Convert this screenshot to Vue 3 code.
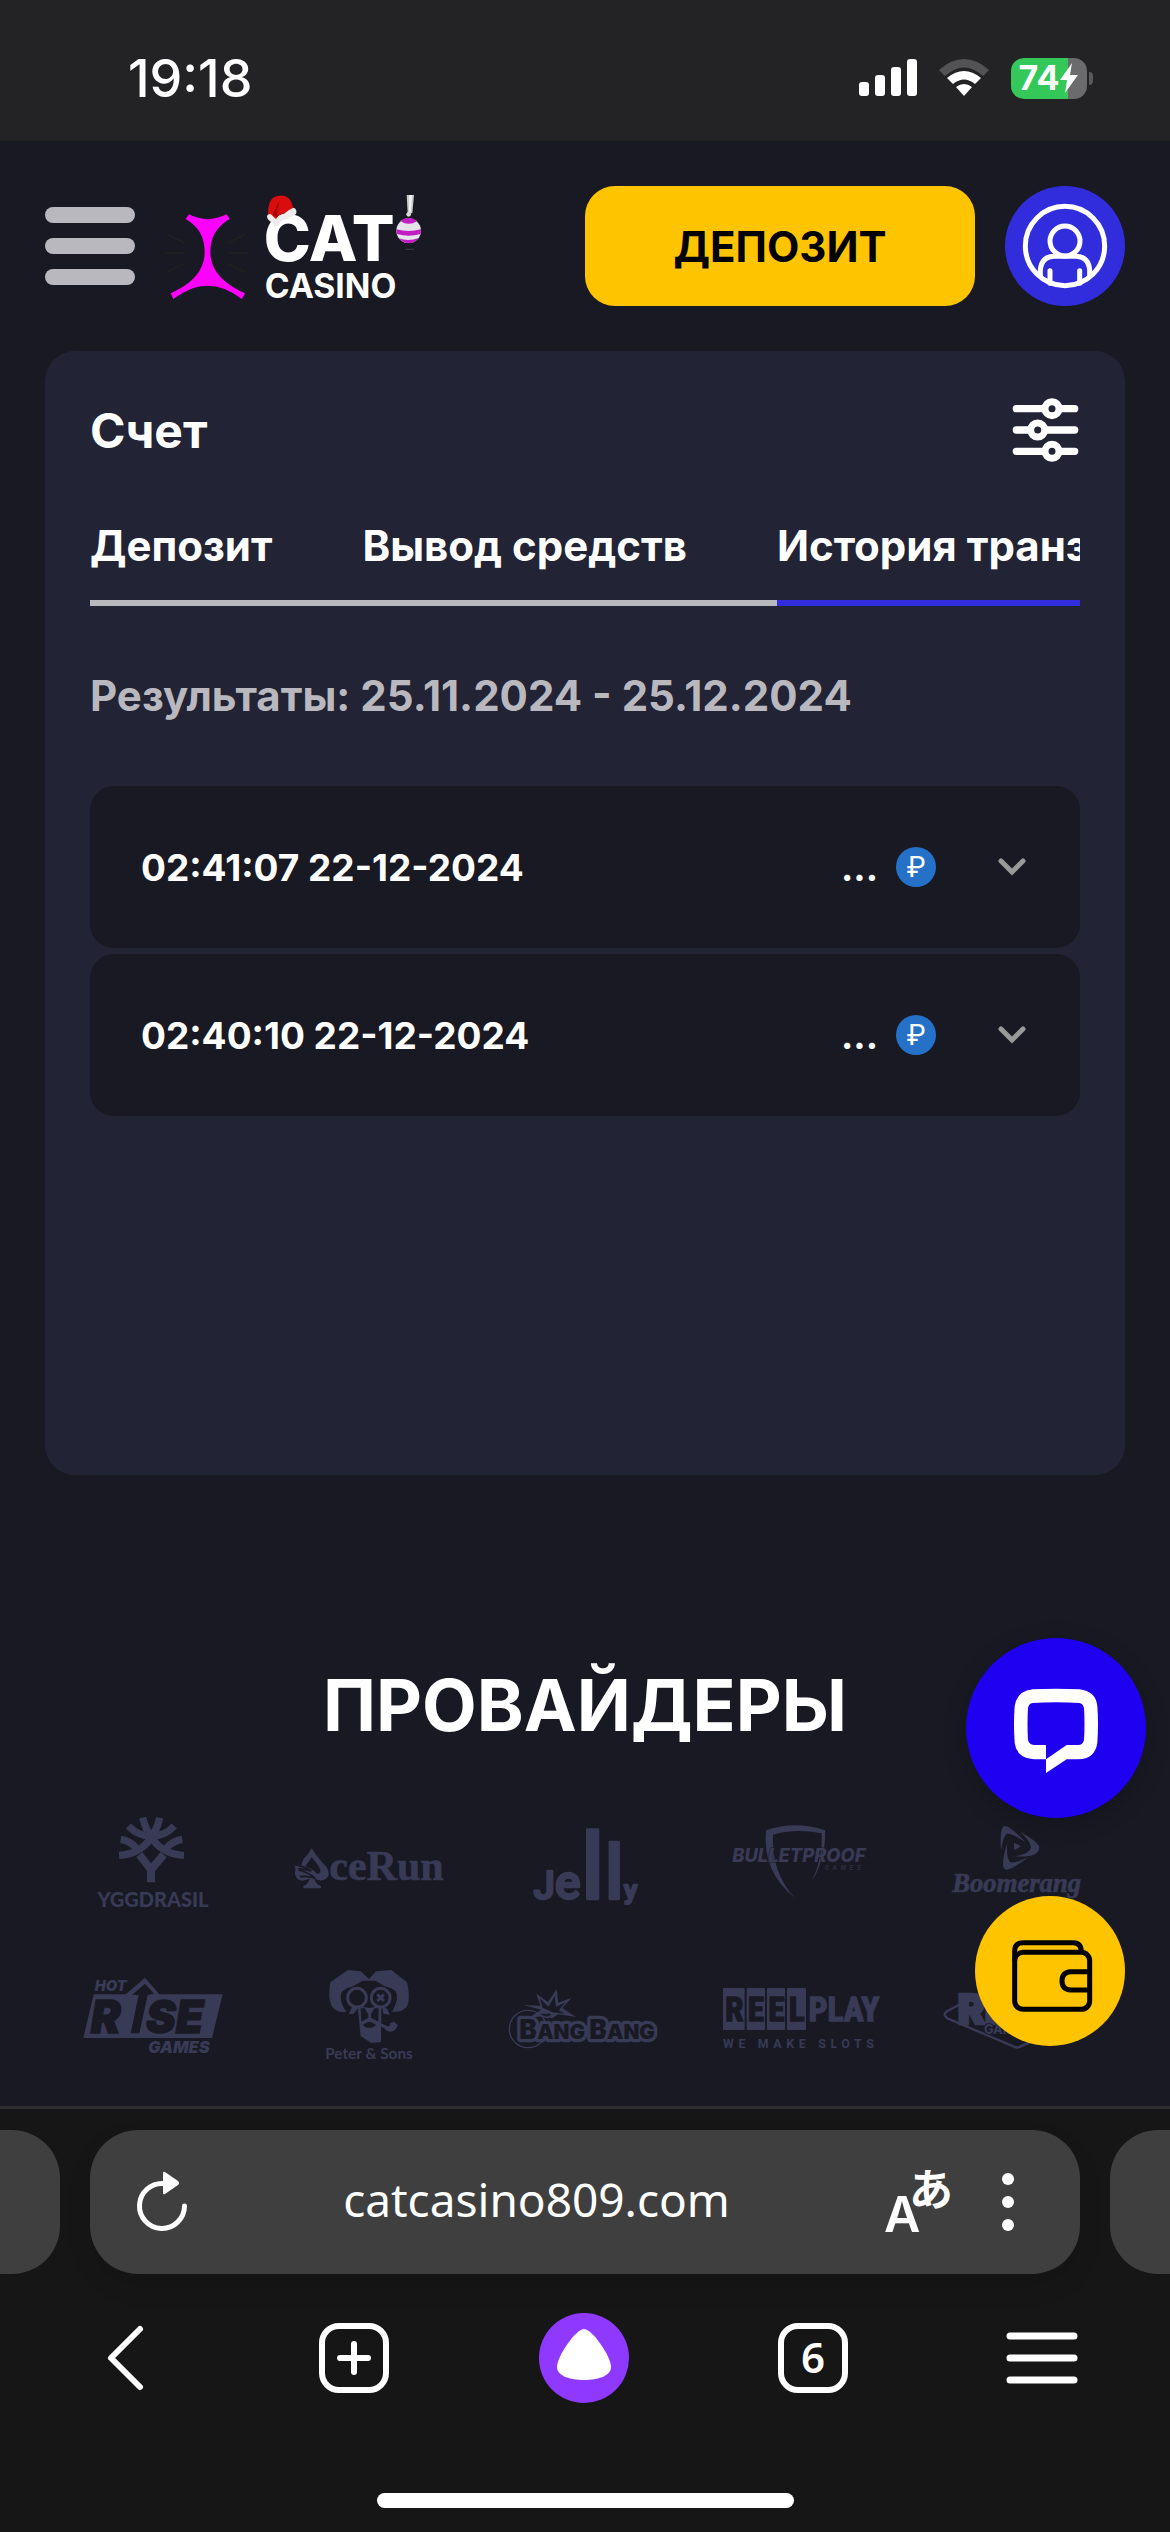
<template>
  <div class="screen">
    <div class="status-bar">
      <span class="clock">19:18</span>
      <div class="status-icons">
        <svg width="58" height="38" viewBox="0 0 58 38" fill="#fff" aria-hidden="true">
          <rect x="0" y="23" width="10" height="14" rx="3" />
          <rect x="16" y="16" width="10" height="21" rx="3" />
          <rect x="32" y="8" width="10" height="29" rx="3" />
          <rect x="48" y="0" width="10" height="37" rx="3" />
        </svg>
        <svg width="50" height="38" viewBox="0 0 50 38" aria-hidden="true">
          <path d="M0 11Q25-11 50 11L44 17Q25 0 6 17Z" fill="#535355" />
          <path d="M8 19Q25 5 42 19L36 25Q25 16 14 25Z" fill="#fff" />
          <path d="M17 28Q25 22 33 28L25 37Z" fill="#fff" />
        </svg>
        <div class="battery">
          <span class="battery-level">74</span>
          <svg width="20" height="30" viewBox="0 0 20 30" fill="#fff" aria-hidden="true">
            <path d="M13 0L1 17H8L6 30L19 12H11Z" />
          </svg>
        </div>
      </div>
    </div>

    <div class="page">
      <header class="site-header">
        <button class="menu-btn" aria-label="Меню">
          <span></span>
          <span></span>
          <span></span>
        </button>
        <a href="#" class="logo" aria-label="Cat Casino">
          <svg width="262" height="116" viewBox="45 24 786 348">
            <g stroke="#20201f" stroke-width="5">
              <path d="M52 163L104 189M47 219H102M50 277L105 250M285 163L233 189M292 219H237M286 277L233 251" />
            </g>
            <path d="M107 117L117 103Q172 132 230 103L239 117C196 141 181 176 181 217C182 264 210 306 285 340L276 357Q172 277 70 357L62 340C137 306 163 264 164 217C164 176 150 141 107 117Z" fill="#ff00ff" />
            <g class="logo-text">
              <text x="341" y="244" font-size="190" font-weight="800">CAT</text>
              <text x="344" y="354" font-size="101" font-weight="700">CASINO</text>
            </g>
            <path d="M354 113C353 70 361 48 390 47C413 45 426 60 430 88L384 107L380 124L356 116Z" fill="#d90d0d" />
            <path d="M368 104Q378 78 388 66Q380 90 382 112Z" fill="#a50505" />
            <path d="M351 107Q360 97 368 108L378 117Q388 103 402 101Q418 87 431 83Q443 88 438 102Q415 118 397 121L383 138Q372 141 369 129Q350 120 351 107Z" fill="#eeecec" />
            <path d="M770 45H792L787 100H773Z" fill="#c9c9cd" />
            <path d="M778 45H786L782 98H777Z" fill="#f5f5f7" />
            <circle cx="776" cy="152" r="37" fill="#e4e4ea" />
            <path d="M752 124Q776 139 801 124Q790 114 776 114Q761 114 752 124ZM739 148Q776 158 813 148L812 162Q776 172 741 162ZM747 175Q776 186 806 174Q794 190 776 190Q758 189 747 175Z" fill="#c41cc4" />
            <circle cx="776" cy="103" r="7" fill="#ddd" />
            <path d="M767 208H792" stroke="#3f3f49" stroke-width="3" />
          </svg>
        </a>
        <button class="deposit-btn">ДЕПОЗИТ</button>
        <button class="profile-btn" aria-label="Профиль">
          <svg width="120" height="120" viewBox="75 48 360 360" fill="none" stroke="#fff" stroke-width="15">
            <circle cx="255" cy="228" r="119" />
            <circle cx="255" cy="213" r="45" />
            <path d="M181 322V302Q183 259 225 259H285Q327 259 329 302V322" />
            <path d="M210 340V302M299 340V302" stroke-linecap="round" />
          </svg>
        </button>
      </header>

      <main class="card">
        <div class="card-head">
          <h1>Счет</h1>
          <button class="filter-btn" aria-label="Фильтр">
            <svg width="68" height="66" viewBox="96 680 204 198">
              <path d="M109 715H284M109 779H284M109 843H284" stroke="#fff" stroke-width="22" stroke-linecap="round" />
              <g fill="#222334" stroke="#fff" stroke-width="21">
                <circle cx="216" cy="715" r="21" />
                <circle cx="173" cy="779" r="21" />
                <circle cx="216" cy="843" r="21" />
              </g>
            </svg>
          </button>
        </div>

        <nav class="tabs">
          <button
            v-for="tab in tabs"
            :key="tab"
            class="tab"
            :class="{ 'tab-active': tab === activeTab }"
            @click="activeTab = tab"
          >{{ tab }}</button>
        </nav>

        <p class="results">Результаты: 25.11.2024 - 25.12.2024</p>

        <div class="history">
          <button v-for="item in transactions" :key="item" class="history-row">
            <span class="history-date">{{ item }}</span>
            <span class="history-amount">...</span>
            <span class="currency">₽</span>
            <svg width="30" height="20" viewBox="0 0 30 20" fill="none" stroke="#999" stroke-width="5" stroke-linecap="round" aria-hidden="true">
              <path d="M4 4L15 15L26 4" />
            </svg>
          </button>
        </div>
      </main>

      <section class="providers">
        <h2>ПРОВАЙДЕРЫ</h2>
        <div class="provider-grid">
          <!-- Yggdrasil -->
          <svg viewBox="-45 -6 648 459">
            <g fill="none" stroke="#383a56" stroke-width="22">
              <path d="M248 86Q258 128 276 142Q242 196 177 199M299 86Q290 128 272 142Q306 196 372 199" />
              <path d="M205 111Q235 142 276 142M343 111Q313 142 272 142M182 151Q212 156 230 178M367 151Q337 156 318 178" />
              <path d="M238 197L273 242L311 197M273 236V280" stroke-width="24" />
            </g>
            <text x="279" y="353" font-family="Lato" font-size="60" font-weight="900" text-anchor="middle">YGGDRASIL</text>
          </svg>
          <!-- AceRun -->
          <svg viewBox="603 -6 648 459">
            <path d="M755 177Q770 204 797 231Q817 259 793 272Q777 278 762 268Q766 285 783 291V298H730V291Q746 285 749 268Q736 278 717 273Q700 262 707 241L702 226L724 228L730 211Q747 194 755 177ZM755 205L736 232Q760 240 770 254Q785 255 780 239Q771 222 755 205Z" fill-rule="evenodd" />
            <path d="M702 226Q734 232 754 246Q735 242 716 239M715 243Q744 249 766 268Q745 260 720 263" stroke="#191923" stroke-width="5" fill="none" />
            <text x="808" y="272" font-family="Liberation Serif" font-size="126" font-weight="700" stroke="#383a56" stroke-width="2">ceRun</text>
          </svg>
          <!-- Jelly -->
          <svg viewBox="-9 -6 648 459">
            <text x="316" y="329" font-family="Roboto" font-weight="500" text-anchor="middle" stroke="#383a56" stroke-width="7" stroke-linejoin="round"><tspan font-size="115">J</tspan><tspan font-size="145">e</tspan><tspan font-size="280">l</tspan><tspan font-size="230">l</tspan><tspan font-size="80">y</tspan></text>
          </svg>
          <!-- Bulletproof -->
          <svg viewBox="639 -6 648 459">
            <path d="M858 124Q948 94 1035 124Q1039 204 996 277Q1029 204 1025 133Q945 117 879 137Q874 252 945 327Q846 249 858 124Z" />
            <text x="757" y="219" font-family="Inter" font-size="55" font-weight="800" font-style="italic" stroke="#191923" stroke-width="3" paint-order="stroke">BULLETPROOF</text>
            <text x="1034" y="242" font-family="Inter" font-size="17" font-style="italic" class="tracked">GAMES</text>
          </svg>
          <!-- Boomerang -->
          <svg viewBox="87 564 648 459">
            <path d="M363 756Q359 690 371 682Q383 673 438 731Q393 700 380 705Q370 710 363 756ZM420 698Q479 731 478 746Q475 777 405 772Q451 763 453 746Q454 730 420 698ZM382 731Q378 782 392 790Q402 794 446 774Q392 815 377 812Q359 805 382 731ZM402 731L423 742L402 754Z" />
            <text x="410" y="880" font-family="Liberation Serif" font-size="80" font-weight="700" font-style="italic" text-anchor="middle" stroke="#383a56" stroke-width="2">Boomerang</text>
          </svg>
          <!-- Hot Rise Games -->
          <svg viewBox="-45 453 648 459">
            <path d="M101 616H197L255 566L298 616H488L456 747H70Z" />
            <path d="M216 618L255 584L282 614L263 618L238 733H212L236 618Z" fill="#191923" />
            <g font-family="Inter" font-style="italic" font-weight="900">
              <text x="104" y="607" font-size="44">HOT</text>
              <g fill="#191923" stroke="#191923" stroke-width="4">
                <text x="92" y="732" font-size="134">R</text>
                <text x="258" y="732" font-size="134">SE</text>
              </g>
              <text x="265" y="791" font-size="49">GAMES</text>
            </g>
          </svg>
          <!-- Peter & Sons -->
          <svg viewBox="603 453 648 459">
            <path d="M859 668Q825 673 814 649Q803 625 811 580L864 543L902 547L927 570L948 547L994 543L1041 580Q1052 622 1042 650Q1030 671 996 668Q1020 628 1006 606Q994 595 977 593L946 575H908L876 593Q853 597 844 611Q836 637 859 668Z" />
            <path d="M893 651L902 742L934 762L963 759L964 650L928 657Z" />
            <g fill="#191923">
              <path d="M900 590Q927 568 953 590L938 602H918Z" />
              <path d="M902 658H914L925 676V686L904 698ZM956 658H944L933 676V686L955 698Z" />
              <path d="M904 708L928 693L953 708L941 716Q928 722 914 716Z" stroke="#383a56" stroke-width="5" />
            </g>
            <g fill="#191923" stroke="#383a56" stroke-width="9">
              <circle cx="891" cy="626" r="28" />
              <circle cx="962" cy="626" r="28" />
              <path d="M952 616L972 636M972 616L952 636M961 707L984 718" />
            </g>
            <path d="M877 652L894 658L881 674L866 676ZM967 654L982 660L990 677L970 674ZM979 714Q993 713 990 703L1002 698L1014 709Q1006 728 991 728Q982 728 974 720Z" />
            <text x="927" y="811" font-family="Lato" font-size="46" font-weight="700" text-anchor="middle">Peter &amp; Sons</text>
          </svg>
          <!-- Bang Bang -->
          <svg viewBox="-9 453 648 459">
            <circle cx="144" cy="720" r="56" fill="none" stroke="#383a56" stroke-width="4" />
            <path d="M183 662L130 648L181 650L169 614L204 639L230 600L235 641L275 626L247 657L288 684L235 676L216 688L196 680L146 687Z" />
            <path d="M188 656L180 629L206 653L224 621L228 654L256 640L236 664L255 674L218 670Z" fill="#191923" />
            <path d="M176 677Q183 670 198 673Q211 668 218 676L203 686Z" fill="#191923" stroke="#383a56" stroke-width="5" />
            <text x="118" y="750" font-family="Inter" font-size="62" font-weight="900" fill="#191923" stroke="#383a56" stroke-width="20" stroke-linejoin="round" paint-order="stroke"><tspan font-size="80">B</tspan>ANG <tspan font-size="80">B</tspan>ANG</text>
          </svg>
          <!-- ReelPlay -->
          <svg viewBox="639 453 648 459">
            <rect x="729" y="597" width="65" height="126" rx="3" />
            <rect x="800" y="597" width="55" height="126" rx="3" />
            <rect x="861" y="597" width="54" height="126" rx="3" />
            <rect x="921" y="597" width="57" height="126" rx="3" />
            <g class="reel" font-weight="700" text-anchor="middle" font-size="100" stroke-width="4">
              <g fill="#191923" stroke="#191923">
                <text x="763" y="697">R</text>
                <text x="828" y="697">E</text>
                <text x="889" y="697">E</text>
                <text x="950" y="697">L</text>
              </g>
              <text x="1092" y="697" stroke="#383a56">PLAY</text>
            </g>
            <text x="729" y="778" font-family="Roboto" font-size="37" font-weight="700" class="tracked-wide">WE MAKE SLOTS</text>
          </svg>
          <!-- Red Rake -->
          <svg viewBox="87 1023 648 459">
            <path d="M240 1216L204 1235Q184 1246 204 1259L403 1343Q411 1348 420 1343L610 1259Q630 1246 610 1235L560 1212" fill="none" stroke="#383a56" stroke-width="7" />
            <text x="233" y="1275" font-family="Inter" font-size="122" font-weight="900" stroke="#383a56" stroke-width="8">RED</text>
            <text x="312" y="1305" font-family="Inter" font-size="38" font-weight="800" stroke="#191923" stroke-width="4" paint-order="stroke">GAMES</text>
          </svg>
        </div>
      </section>

      <div class="floating">
        <button class="chat-btn" aria-label="Чат">
          <svg width="180" height="180" viewBox="258 114 540 540">
            <path d="M498 478H462Q411 477 404 428Q400 373 404 318Q411 273 458 268Q528 265 598 268Q647 273 652 318Q656 373 652 428Q645 477 594 478H560L498 519V478L560 435H594Q609 435 612 420Q615 373 612 324Q609 310 598 309Q528 304 458 309Q446 311 444 324Q441 373 444 420Q447 433 462 435H498Z" fill="#fff" fill-rule="evenodd" />
          </svg>
        </button>
        <button class="wallet-btn" aria-label="Кошелёк">
          <svg width="150" height="150" viewBox="285 888 450 450" fill="none" stroke="#000" stroke-width="15">
            <rect x="404" y="1057" width="225" height="171" rx="25" />
            <path d="M404 1082V1053Q404 1028 429 1028H580Q604 1028 604 1057M628 1115H572Q546 1117 546 1142Q546 1168 572 1170H628" />
          </svg>
        </button>
      </div>
    </div>

    <footer class="browser">
      <div class="address-row">
        <div class="side-tab side-tab-left"></div>
        <div class="address-bar">
          <button aria-label="Обновить">
            <svg width="50" height="60" viewBox="0 0 50 60">
              <path d="M26 11.500A22.500 22.500 0 1 0 46.500 34" fill="none" stroke="#fff" stroke-width="5" stroke-linecap="round" />
              <path d="M25 1Q25-1 27 0L40 9Q42 11 40 13L27 22Q25 23 25 21Z" fill="#fff" />
            </svg>
          </button>
          <input v-model="address" type="text" aria-label="Адрес сайта" />
          <button aria-label="Перевести">
            <svg width="66" height="66" viewBox="0 0 66 66" fill="#fff">
              <text x="-1" y="63" font-family="Inter" font-size="50" font-weight="600">A</text>
              <text x="24" y="37" font-family="Noto Sans CJK JP" font-size="44" font-weight="700">あ</text>
            </svg>
          </button>
          <button class="more-btn" aria-label="Ещё">
            <svg width="12" height="60" viewBox="0 0 12 60" fill="#fff">
              <circle cx="6" cy="7" r="6" />
              <circle cx="6" cy="30" r="6" />
              <circle cx="6" cy="53" r="6" />
            </svg>
          </button>
        </div>
        <div class="side-tab side-tab-right"></div>
      </div>

      <nav class="browser-nav">
        <button aria-label="Назад">
          <svg width="90" height="90" viewBox="0 0 90 90" fill="none" stroke="#fff" stroke-width="6" stroke-linecap="round" stroke-linejoin="round">
            <path d="M60 16L31 45L60 74" />
          </svg>
        </button>
        <button aria-label="Новая вкладка">
          <svg width="90" height="90" viewBox="0 0 90 90" fill="none" stroke="#fff" stroke-width="6" stroke-linecap="round">
            <rect x="13" y="13" width="64" height="64" rx="17" />
            <path d="M31 45H59M45 31V59" />
          </svg>
        </button>
        <button aria-label="Алиса">
          <svg width="90" height="90" viewBox="0 0 90 90">
            <circle cx="45" cy="45" r="45" fill="#8f38ff" />
            <path d="M45 16C53 16 72 43 72 54C72 63 59 67 45 67C31 67 18 63 18 54C18 43 37 16 45 16Z" fill="#fff" />
          </svg>
        </button>
        <button aria-label="Вкладки">
          <svg width="90" height="90" viewBox="0 0 90 90">
            <rect x="13" y="13" width="64" height="64" rx="17" fill="none" stroke="#fff" stroke-width="6" />
            <text x="45" y="60" font-family="Noto Sans" font-size="42" font-weight="600" fill="#fff" text-anchor="middle">6</text>
          </svg>
        </button>
        <button aria-label="Меню браузера">
          <svg width="90" height="90" viewBox="0 0 90 90" stroke="#fff" stroke-width="7" stroke-linecap="round">
            <path d="M13 23H77M13 45H77M13 67H77" />
          </svg>
        </button>
      </nav>
      <div class="home-indicator"></div>
    </footer>
  </div>
</template>

<script setup>
import { ref } from 'vue';

const tabs = ['Депозит', 'Вывод средств', 'История транзакций'];
const activeTab = ref('История транзакций');
const transactions = ['02:41:07 22-12-2024', '02:40:10 22-12-2024'];
const address = ref('catcasino809.com');
</script>

<style>
body { margin: 0; background: #161616; }
</style>

<style scoped>
.screen {
  display: flex;
  flex-direction: column;
  min-height: 100vh;
  background: #191923;
  color: #fff;
  font-family: Inter, "Liberation Sans", sans-serif;
}
.screen * { box-sizing: border-box; }
button {
  padding: 0;
  border: none;
  background: none;
  color: inherit;
  font-family: inherit;
  cursor: pointer;
}
svg { display: block; overflow: visible; }

/* Status bar */
.status-bar {
  display: flex;
  justify-content: space-between;
  align-items: center;
  height: 141px;
  padding: 15px 83px 0 128px;
  background: #232325;
}
.clock { font-size: 52px; font-weight: 500; }
.status-icons { display: flex; align-items: center; gap: 22px; }
.battery {
  position: relative;
  display: flex;
  align-items: center;
  justify-content: center;
  width: 76px;
  height: 41px;
  border-radius: 13px;
  background: linear-gradient(90deg, #34c759 75%, #6b6b6d 75%);
}
.battery::after {
  content: "";
  position: absolute;
  left: 78px;
  top: 14px;
  width: 4px;
  height: 13px;
  border-radius: 0 4px 4px 0;
  background: #59595b;
}
.battery-level { font-size: 34px; line-height: 40px; font-weight: 700; }

/* Header */
.page { position: relative; flex: 1; overflow: hidden; }
.site-header {
  display: flex;
  align-items: center;
  gap: 30px;
  padding: 45px;
}
.menu-btn { display: flex; flex-direction: column; gap: 15px; width: 90px; }
.menu-btn span { height: 16px; border-radius: 8px; background: #b9b8bf; }
.logo { margin-right: auto; }
.logo-text { fill: #fff; font-family: Inter, sans-serif; }
.deposit-btn {
  width: 390px;
  height: 120px;
  border-radius: 30px;
  background: #ffc400;
  color: #000;
  font-size: 42px;
  font-weight: 700;
}
.profile-btn {
  width: 120px;
  height: 120px;
  border-radius: 50%;
  background: #312ddd;
}

/* Account card */
.card {
  min-height: 1124px;
  margin: 0 45px;
  padding: 45px;
  border-radius: 30px;
  background: #222334;
}
.card-head {
  display: flex;
  align-items: center;
  justify-content: space-between;
  height: 68px;
  margin-bottom: 52px;
}
h1 { margin: 0; font-size: 48px; font-weight: 700; }
.tabs { display: flex; overflow: hidden; }
.tab {
  flex: none;
  padding: 0 90px 24px 0;
  border-bottom: 6px solid #b9b8bf;
  font-size: 42px;
  line-height: 60px;
  font-weight: 700;
  text-align: left;
}
.tab-active { border-color: #312ddd; }
.results {
  margin: 60px 0;
  color: #b9b8bf;
  font-size: 42px;
  line-height: 60px;
  font-weight: 700;
}
.history { display: flex; flex-direction: column; gap: 6px; }
.history-row {
  display: flex;
  align-items: center;
  height: 162px;
  padding: 0 53px 0 51px;
  border-radius: 24px;
  background: #191923;
  font-size: 37px;
  font-weight: 700;
}
.history-date { flex: 1; text-align: left; }
.history-amount { margin-right: 18px; }
.currency {
  width: 40px;
  height: 40px;
  margin-right: 61px;
  border-radius: 50%;
  background: #2671c8;
  font-size: 28px;
  line-height: 40px;
  font-weight: 400;
}

/* Providers */
.providers { padding: 188px 45px 12px; }
h2 {
  margin: 0 0 40px;
  font-size: 71px;
  line-height: 84px;
  font-weight: 700;
  text-align: center;
}
.provider-grid {
  display: grid;
  grid-template-columns: repeat(5, 1fr);
  fill: #383a56;
}
.provider-grid svg { width: 100%; }
.reel { font-family: "Liberation Sans Narrow", "Roboto Condensed", "DejaVu Sans Condensed", sans-serif; }
.tracked { letter-spacing: 12px; }
.tracked-wide { letter-spacing: 14px; }

/* Buttons over the page */
.floating {
  position: absolute;
  right: 24px;
  bottom: 60px;
  display: flex;
  flex-direction: column;
  align-items: center;
  gap: 78px;
}
.chat-btn {
  width: 180px;
  height: 180px;
  border-radius: 50%;
  background: #2000f0;
  box-shadow: 0 6px 24px rgba(0, 0, 0, 0.2);
}
.wallet-btn {
  width: 150px;
  height: 150px;
  margin-right: 12px;
  border-radius: 50%;
  background: #ffc400;
}

/* Browser chrome */
.browser {
  padding: 21px 0 24px;
  border-top: 3px solid #2e2e2e;
  background: #161616;
}
.address-row { display: flex; gap: 30px; }
.side-tab { width: 60px; background: #3f3f3f; }
.side-tab-left { border-radius: 0 48px 48px 0; }
.side-tab-right { border-radius: 48px 0 0 48px; }
.address-bar {
  flex: 1;
  display: flex;
  align-items: center;
  height: 144px;
  padding: 0 66px 0 48px;
  border-radius: 48px;
  background: #3f3f3f;
  box-shadow: 0 12px 24px rgba(0, 0, 0, 0.1);
}
.address-bar input {
  flex: 1;
  min-width: 0;
  padding: 0 0 6px;
  border: none;
  outline: none;
  background: none;
  color: #fff;
  font-family: "Noto Sans", sans-serif;
  font-size: 46px;
  text-align: center;
}
.more-btn { margin-left: 51px; }
.browser-nav {
  display: flex;
  justify-content: space-between;
  padding: 39px 83px 90px 80px;
}
.home-indicator {
  width: 417px;
  height: 15px;
  margin: 0 auto;
  border-radius: 8px;
  background: #fff;
}
</style>
